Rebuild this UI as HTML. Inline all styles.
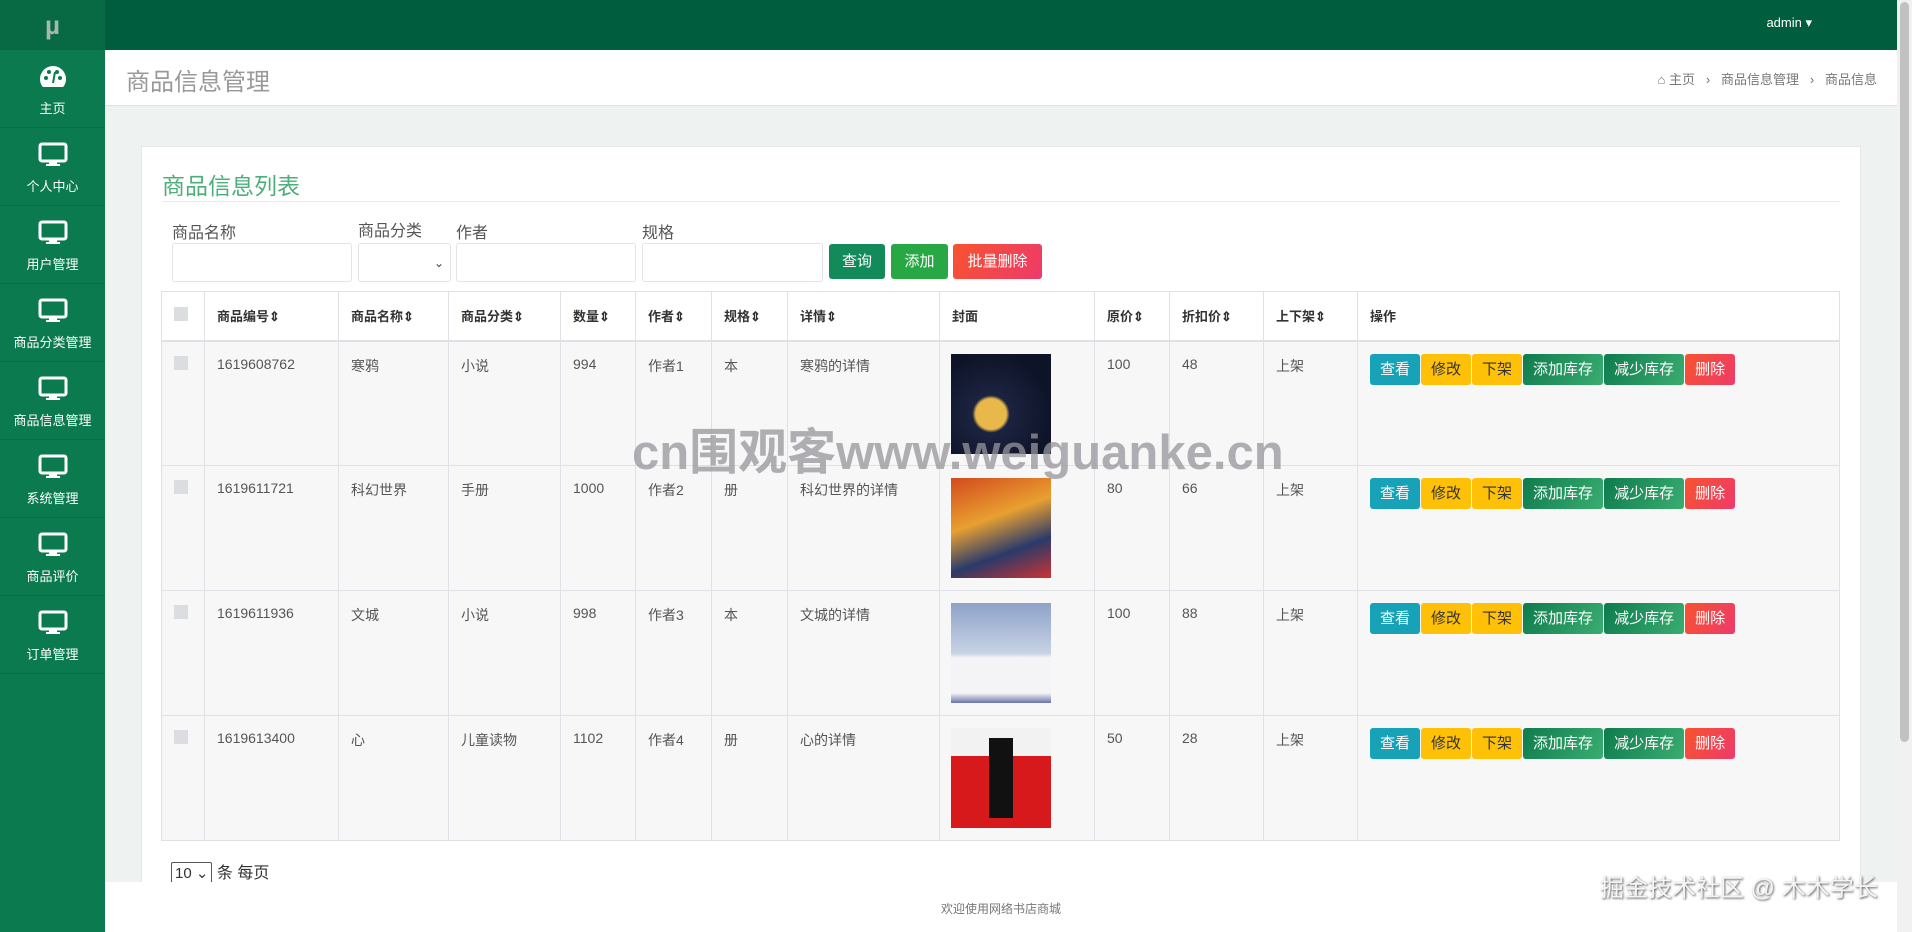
<!DOCTYPE html>
<html><head><meta charset="utf-8"><style>
*{box-sizing:border-box;margin:0;padding:0}
body{width:1912px;height:932px;overflow:hidden;font-family:"Liberation Sans","Noto Sans CJK SC",sans-serif;background:#eef2f1;position:relative;color:#444}
.side{position:absolute;left:0;top:0;width:105px;height:932px;background:#0b7a4f}
.logo{height:50px;background:#086a45;color:#a8b8b0;font-size:26px;font-weight:bold;text-align:center;line-height:50px}
.item{height:78px;border-bottom:1px solid #0a6c46;text-align:center;color:#fff;font-size:13px;padding-top:14px}
.item svg{display:block;margin:0 auto 8px}
.top{position:absolute;left:105px;top:0;right:0;height:50px;background:#005e3f}
.admin{position:absolute;right:100px;top:15px;color:#fff;font-size:13px}
.hdr{position:absolute;left:105px;top:50px;width:1792px;height:56px;background:#fff;border-bottom:1px solid #dde}
.hdr h1{font-weight:normal;font-size:24px;color:#999;position:absolute;left:21px;top:12px}
.bc{position:absolute;right:20px;top:19px;font-size:13px;color:#777}
.card{position:absolute;left:141px;top:146px;width:1720px;height:760px;background:#fff;border:1px solid #e5e8e7}
.ttl{position:absolute;left:20px;top:20px;font-size:23px;color:#4caf7a}
.line{position:absolute;left:20px;right:20px;top:54px;border-top:1px solid #e8ecea}
.lbl{position:absolute;font-size:16px;color:#555;top:72px}
.inp{position:absolute;top:96px;height:39px;border:1px solid #e2e4e6;border-radius:3px;background:#fff}
.btn{position:absolute;top:97px;height:35px;color:#fff;font-size:15px;line-height:35px;text-align:center;border-radius:3px}
table{position:absolute;left:161px;top:291px;border-collapse:collapse;table-layout:fixed;width:1679px}
td,th{border:1px solid #dee2e6;font-size:14px;text-align:left;vertical-align:top;padding:0 12px;color:#555}
th{height:49px;vertical-align:middle;font-weight:bold;color:#333;font-size:13px;border-bottom:2px solid #dee2e6}
td{height:125px;padding-top:14px;background:#f7f7f7}
.cb{display:inline-block;width:14px;height:14px;background:#dcdde0}
.cov{width:100px;height:100px;margin-left:-1px;margin-top:-2px}
.ops span{display:inline-block;height:31px;line-height:31px;padding:0 10px;color:#fff;font-size:15px;border-radius:3px;margin-right:1px;margin-top:-2px}
.v{background:#17a2b8}.y{background:#ffc107;color:#333!important}.g{background:linear-gradient(120deg,#0f7b4e,#3aad70)}.r{background:linear-gradient(120deg,#f7532f,#ee3a6a)}
.foot{position:absolute;left:105px;top:882px;width:1792px;height:50px;background:#fff;text-align:center;font-size:12px;color:#777;padding-top:18px}
.wm{position:absolute;left:632px;top:413px;font-size:49px;font-weight:bold;color:rgba(150,150,155,.75);white-space:nowrap}
.jj{position:absolute;left:1600px;top:868px;font-size:24px;color:#f4f4f4;white-space:nowrap;text-shadow:1px 1px 2px #555}
.sb{position:absolute;right:0;top:0;width:15px;height:932px;background:#f1f1f1}
.sb div{position:absolute;left:3px;top:2px;width:9px;height:740px;background:#c1c1c1;border-radius:5px}
</style></head><body>
<div class="side">
<div class="logo">µ</div>
<div class="item"><svg width="30" height="26" viewBox="0 0 30 26"><path d="M15 2A13 13 0 0 0 2 15c0 3 1 6 3 8h20c2-2 3-5 3-8A13 13 0 0 0 15 2z" fill="#fff"/><circle cx="8" cy="14" r="2" fill="#0b7a4f"/><circle cx="22" cy="14" r="2" fill="#0b7a4f"/><circle cx="11" cy="8" r="2" fill="#0b7a4f"/><circle cx="19" cy="8" r="2" fill="#0b7a4f"/><path d="M15 19l2-11" stroke="#0b7a4f" stroke-width="2"/></svg>主页</div>
<div class="item"><svg width="30" height="26" viewBox="0 0 30 26"><rect x="2" y="2" width="26" height="17" rx="2" fill="none" stroke="#fff" stroke-width="3"/><rect x="11" y="19" width="8" height="4" fill="#fff"/><rect x="8" y="22" width="14" height="2" fill="#fff"/></svg>个人中心</div>
<div class="item"><svg width="30" height="26" viewBox="0 0 30 26"><rect x="2" y="2" width="26" height="17" rx="2" fill="none" stroke="#fff" stroke-width="3"/><rect x="11" y="19" width="8" height="4" fill="#fff"/><rect x="8" y="22" width="14" height="2" fill="#fff"/></svg>用户管理</div>
<div class="item"><svg width="30" height="26" viewBox="0 0 30 26"><rect x="2" y="2" width="26" height="17" rx="2" fill="none" stroke="#fff" stroke-width="3"/><rect x="11" y="19" width="8" height="4" fill="#fff"/><rect x="8" y="22" width="14" height="2" fill="#fff"/></svg>商品分类管理</div>
<div class="item"><svg width="30" height="26" viewBox="0 0 30 26"><rect x="2" y="2" width="26" height="17" rx="2" fill="none" stroke="#fff" stroke-width="3"/><rect x="11" y="19" width="8" height="4" fill="#fff"/><rect x="8" y="22" width="14" height="2" fill="#fff"/></svg>商品信息管理</div>
<div class="item"><svg width="30" height="26" viewBox="0 0 30 26"><rect x="2" y="2" width="26" height="17" rx="2" fill="none" stroke="#fff" stroke-width="3"/><rect x="11" y="19" width="8" height="4" fill="#fff"/><rect x="8" y="22" width="14" height="2" fill="#fff"/></svg>系统管理</div>
<div class="item"><svg width="30" height="26" viewBox="0 0 30 26"><rect x="2" y="2" width="26" height="17" rx="2" fill="none" stroke="#fff" stroke-width="3"/><rect x="11" y="19" width="8" height="4" fill="#fff"/><rect x="8" y="22" width="14" height="2" fill="#fff"/></svg>商品评价</div>
<div class="item"><svg width="30" height="26" viewBox="0 0 30 26"><rect x="2" y="2" width="26" height="17" rx="2" fill="none" stroke="#fff" stroke-width="3"/><rect x="11" y="19" width="8" height="4" fill="#fff"/><rect x="8" y="22" width="14" height="2" fill="#fff"/></svg>订单管理</div>
</div>
<div class="top"><div class="admin">admin ▾</div></div>
<div class="hdr"><h1>商品信息管理</h1><div class="bc">⌂ 主页 &nbsp; › &nbsp; 商品信息管理 &nbsp; › &nbsp; 商品信息</div></div>
<div class="card">
<div class="ttl">商品信息列表</div><div class="line"></div>
<div class="lbl" style="left:30px">商品名称</div><div class="lbl" style="left:216px;top:70px">商品分类</div><div class="lbl" style="left:314px">作者</div><div class="lbl" style="left:500px">规格</div>
<div class="inp" style="left:30px;width:180px"></div>
<div class="inp" style="left:216px;width:93px;font-size:12px;text-align:right;padding:12px 6px 0 0">⌄</div>
<div class="inp" style="left:314px;width:180px"></div>
<div class="inp" style="left:500px;width:181px"></div>
<div class="btn" style="left:687px;width:56px;background:#138a5a">查询</div>
<div class="btn" style="left:749px;width:57px;background:#28a745">添加</div>
<div class="btn" style="left:811px;width:89px;background:linear-gradient(120deg,#f7532f,#ee3a6a)">批量删除</div>
</div>
<table>
<colgroup><col style="width:43px"><col style="width:134px"><col style="width:110px"><col style="width:112px"><col style="width:75px"><col style="width:76px"><col style="width:76px"><col style="width:152px"><col style="width:155px"><col style="width:75px"><col style="width:94px"><col style="width:94px"><col></colgroup>
<tr style="background:#fff"><th><span class="cb"></span></th><th>商品编号⇕</th><th>商品名称⇕</th><th>商品分类⇕</th><th>数量⇕</th><th>作者⇕</th><th>规格⇕</th><th>详情⇕</th><th>封面</th><th>原价⇕</th><th>折扣价⇕</th><th>上下架⇕</th><th>操作</th></tr>
<tr><td><span class="cb"></span></td><td>1619608762</td><td>寒鸦</td><td>小说</td><td>994</td><td>作者1</td><td>本</td><td>寒鸦的详情</td><td><div class="cov" style="background:radial-gradient(circle at 40% 60%,#e8b84a 0 18%,#1c2340 22%,#0e1428 70%)"></div></td><td>100</td><td>48</td><td>上架</td><td class="ops"><span class="v">查看</span><span class="y">修改</span><span class="y">下架</span><span class="g">添加库存</span><span class="g">减少库存</span><span class="r">删除</span></td></tr>
<tr><td><span class="cb"></span></td><td>1619611721</td><td>科幻世界</td><td>手册</td><td>1000</td><td>作者2</td><td>册</td><td>科幻世界的详情</td><td><div class="cov" style="background:linear-gradient(160deg,#d34a1d,#e8a030 40%,#2a3a6a 70%,#c33)"></div></td><td>80</td><td>66</td><td>上架</td><td class="ops"><span class="v">查看</span><span class="y">修改</span><span class="y">下架</span><span class="g">添加库存</span><span class="g">减少库存</span><span class="r">删除</span></td></tr>
<tr><td><span class="cb"></span></td><td>1619611936</td><td>文城</td><td>小说</td><td>998</td><td>作者3</td><td>本</td><td>文城的详情</td><td><div class="cov" style="background:linear-gradient(180deg,#8ea2c8,#c7d2e4 50%,#f4f4f6 55%,#f4f4f6 90%,#6a74a8)"></div></td><td>100</td><td>88</td><td>上架</td><td class="ops"><span class="v">查看</span><span class="y">修改</span><span class="y">下架</span><span class="g">添加库存</span><span class="g">减少库存</span><span class="r">删除</span></td></tr>
<tr><td><span class="cb"></span></td><td>1619613400</td><td>心</td><td>儿童读物</td><td>1102</td><td>作者4</td><td>册</td><td>心的详情</td><td><div class="cov" style="background:linear-gradient(180deg,#f2f2f2 0 28%,#d8191c 28%);position:relative"><div style="position:absolute;left:38px;top:10px;width:24px;height:80px;background:#111"></div></div></td><td>50</td><td>28</td><td>上架</td><td class="ops"><span class="v">查看</span><span class="y">修改</span><span class="y">下架</span><span class="g">添加库存</span><span class="g">减少库存</span><span class="r">删除</span></td></tr>
</table>
<div style="position:absolute;left:171px;top:859px;font-size:16px;color:#333"><span style="display:inline-block;border:1px solid #555;border-radius:2px;padding:1px 3px;font-size:15px">10 ⌄</span> 条 每页</div>
<div class="foot">欢迎使用网络书店商城</div>
<div class="wm">cn围观客www.weiguanke.cn</div>
<div class="jj">掘金技术社区 @ 木木学长</div>
<div class="sb"><div></div></div>
</body></html>
